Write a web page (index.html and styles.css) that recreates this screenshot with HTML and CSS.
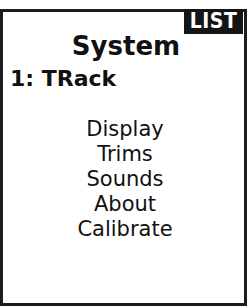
FILE: index.html
```html
<!DOCTYPE html>
<html lang="en">
<head>
  <meta charset="UTF-8">
  <meta name="viewport" content="width=device-width, initial-scale=1.0">
  <title>System</title>
  <link rel="stylesheet" href="styles.css">
</head>
<body>
  <div class="screen">
    <!-- Tab label sits over the top border -->
    <div class="tab">LIST</div>
    <h1 class="title">System</h1>
    <h2 class="model">1: TRack</h2>
    <ul class="menu">
      <li>Display</li>
      <li>Trims</li>
      <li>Sounds</li>
      <li>About</li>
      <li>Calibrate</li>
    </ul>
  </div>
</body>
</html>
```

FILE: styles.css
```css
/* Reset styles */
* {
  box-sizing: border-box;
  margin: 0;
  padding: 0;
}

body {
  font-family: "DejaVu Sans", sans-serif;
  background-color: #ffffff;
  color: #111111;
  width: 248px;
  height: 307px;
  overflow: hidden;
}

/* LCD frame */
.screen {
  position: relative;
  width: 247px;
  height: 297px;
  margin-top: 9px;
  border: 3px solid #1c1c1c;
  padding: 19px 0 0 7px;
}

.tab {
  position: absolute;
  top: -3px;
  right: 1px;
  width: 59px;
  height: 25px;
  background-color: #151515;
  color: #ffffff;
  font-family: "DejaVu Sans Condensed", "DejaVu Sans", sans-serif;
  font-weight: bold;
  font-size: 21px;
  line-height: 25px;
  text-align: center;
  letter-spacing: 0.5px;
}

.title {
  font-size: 26px;
  line-height: 30px;
  font-weight: bold;
  text-align: center;
  padding-right: 2px;
}

.model {
  margin-top: 5px;
  font-size: 22px;
  line-height: 26px;
  font-weight: bold;
}

.menu {
  list-style: none;
  margin-top: 25px;
  text-align: center;
  padding-right: 4px;
}

.menu li {
  font-size: 21px;
  line-height: 25px;
}
```
